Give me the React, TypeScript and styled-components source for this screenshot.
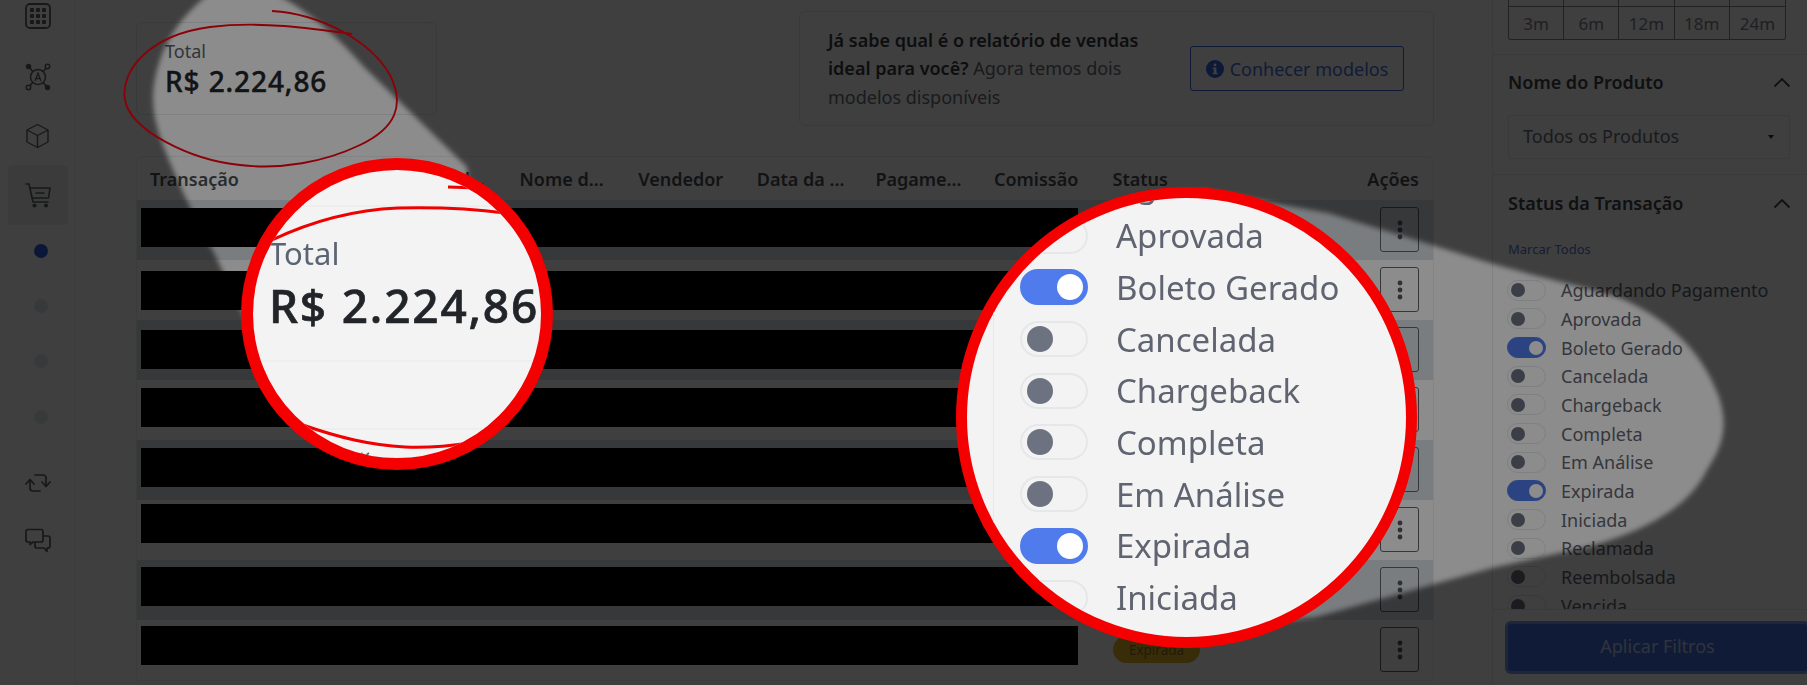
import React from "react";
import styled, { createGlobalStyle } from "styled-components";

const Global = createGlobalStyle`
  html, body { margin: 0; padding: 0; background: #fff; }
  body { font-family: "Noto Sans", "Open Sans", "Liberation Sans", sans-serif; color: #212529; }
  * { box-sizing: border-box; }
`;

const Page = styled.div`
  position: relative;
  display: flex;
  width: 1807px;
  height: 685px;
  overflow: hidden;
  background: #fff;
`;

/* ---------- sidebar ---------- */
const Sidebar = styled.nav`
  flex: 0 0 76px;
  display: flex;
  flex-direction: column;
  align-items: center;
  border-right: 1px solid #eceef0;
  padding-top: 3px;
`;
const NavIcon = styled.div<{ $active?: boolean; $gap?: number }>`
  width: 60px;
  height: ${(p) => (p.$active ? 60 : 26)}px;
  margin-top: ${(p) => p.$gap ?? 0}px;
  display: flex;
  align-items: center;
  justify-content: center;
  border-radius: 4px;
  background: ${(p) => (p.$active ? "#eef1f5" : "transparent")};
  color: #5f6266;
`;
const NavDot = styled.span<{ $active?: boolean; $gap: number }>`
  width: 14px;
  height: 14px;
  margin-top: ${(p) => p.$gap}px;
  margin-left: 7px;
  border-radius: 50%;
  background: ${(p) => (p.$active ? "#2f5fe8" : "#e3e8ec")};
`;

/* ---------- main ---------- */
const Main = styled.main`
  flex: 0 0 1416px;
  padding: 11px 58px 0 60px;
  display: flex;
  flex-direction: column;
`;
const TopRow = styled.div`
  display: flex;
  justify-content: space-between;
  align-items: center;
  height: 115px;
`;
const TotalCard = styled.section`
  width: 301px;
  height: 93px;
  border: 1px solid #e8eaed;
  border-radius: 6px;
  padding: 16px 28px;
`;
const TotalLabel = styled.div`
  font-size: 18px;
  line-height: 24px;
  color: #5a5f6a;
`;
const TotalValue = styled.div`
  font-size: 28px;
  line-height: 36px;
  font-weight: 500;
  letter-spacing: 0.9px;
  -webkit-text-stroke: 0.4px #212529;
  white-space: nowrap;
  color: #212529;
`;
const PromoCard = styled.section`
  width: 635px;
  height: 115px;
  border: 1px solid #e8eaed;
  border-radius: 6px;
  padding: 0 29px 0 28px;
  display: flex;
  align-items: center;
  justify-content: space-between;
`;
const PromoText = styled.p`
  margin: 0;
  width: 332px;
  font-size: 18px;
  line-height: 28.6px;
  color: #6a6f78;
  b { color: #3a3d42; font-weight: 600; }
`;
const OutlineButton = styled.button`
  flex: 0 0 214px;
  height: 45px;
  border: 1px solid #3a66e0;
  border-radius: 3px;
  background: transparent;
  color: #4a72e0;
  font: inherit;
  font-size: 18px;
  display: flex;
  align-items: center;
  justify-content: center;
  gap: 6px;
`;

const Table = styled.section`
  margin-top: 30px;
  flex: 0 0 524px;
  border: 1px solid #eceef0;
  border-radius: 6px 6px 0 0;
  display: flex;
  flex-direction: column;
`;
const HeadRow = styled.div`
  height: 43px;
  display: grid;
  grid-template-columns: 251px repeat(7, 118.6px) 1fr;
  padding: 0 14px 0 13px;
  align-items: center;
  font-size: 18px;
  font-weight: 600;
  color: #4b4f55;
`;
const HeadCell = styled.div<{ $right?: boolean }>`
  white-space: nowrap;
  text-align: ${(p) => (p.$right ? "right" : "left")};
`;
const Row = styled.div<{ $odd: boolean }>`
  position: relative;
  height: 60px;
  background: ${(p) => (p.$odd ? "#dfe3e8" : "#fff")};
  display: flex;
  justify-content: flex-end;
  align-items: flex-start;
  padding: 7px 14px 0 0;
`;
const Redaction = styled.div`
  position: absolute;
  left: 4px;
  width: 937px;
  height: 39px;
  background: #000;
`;
const Badge = styled.span`
  position: absolute;
  left: 976px;
  top: 16px;
  width: 87px;
  height: 27px;
  border-radius: 14px;
  background: #e6b422;
  color: #8a7020;
  font-size: 13.5px;
  display: flex;
  align-items: center;
  justify-content: center;
`;
const KebabButton = styled.button`
  width: 39px;
  height: 45px;
  border: 1px solid #60646a;
  border-radius: 3px;
  background: transparent;
  padding: 0;
  display: flex;
  align-items: center;
  justify-content: center;
`;

/* ---------- filter panel ---------- */
const Panel = styled.aside`
  flex: 0 0 315px;
  height: 685px;
  border-left: 1px solid #e8eaed;
  display: flex;
  flex-direction: column;
`;
const PanelScroll = styled.div`
  flex: 1;
  overflow: hidden;
`;
const PanelSection = styled.section`
  padding: 0 15px;
  border-bottom: 1px solid #e8eaed;
`;
const PeriodGrid = styled.div`
  width: 278px;
  display: grid;
  grid-template-columns: repeat(5, 1fr);
  grid-template-rows: 7px 32px;
  border: 1px solid #8a8d92;
  border-top: 0;
  border-radius: 0 0 3px 3px;
  margin-bottom: 14px;
`;
const PeriodCell = styled.div<{ $last?: boolean }>`
  border-right: ${(p) => (p.$last ? "0" : "1px solid #8a8d92")};
  display: flex;
  align-items: center;
  justify-content: center;
  font-size: 17px;
  color: #80848a;
`;
const PeriodStub = styled(PeriodCell)`
  border-bottom: 1px solid #8a8d92;
`;
const SectionHead = styled.div<{ $top: number }>`
  display: flex;
  justify-content: space-between;
  align-items: center;
  margin-top: ${(p) => p.$top}px;
  padding-right: 1px;
  height: 28px;
  font-size: 18px;
  font-weight: 600;
  color: #3f4348;
`;
const SelectBox = styled.div`
  margin: 19px 2px 15px 0;
  height: 44px;
  padding: 0 14px 3px;
  border: 1px solid #e8eaed;
  border-radius: 3px;
  display: flex;
  align-items: center;
  justify-content: space-between;
  font-size: 18px;
  color: #6a6f78;
`;
const Caret = styled.span`
  width: 0;
  height: 0;
  border-left: 3.5px solid transparent;
  border-right: 3.5px solid transparent;
  border-top: 4px solid #333;
  margin: 3px 1px 0 0;
`;
const MarkAll = styled.div`
  margin-top: 23px;
  font-size: 13px;
  line-height: 18px;
  color: #5a78dc;
`;
const StatusList = styled.div`
  margin-top: 18px;
  margin-left: -1px;
`;
const StatusRow = styled.div`
  height: 28.67px;
  display: flex;
  align-items: center;
  gap: 15px;
  font-size: 18px;
  color: #5f6470;
  white-space: nowrap;
`;
const Toggle = styled.span<{ $on: boolean; $big?: boolean }>`
  position: relative;
  flex: 0 0 auto;
  width: ${(p) => (p.$big ? 68 : 39)}px;
  height: ${(p) => (p.$big ? 36 : 21)}px;
  border-radius: 18px;
  border: ${(p) => (p.$big ? 2 : 1)}px solid ${(p) => (p.$on ? "#4f7bec" : "#e6e7ea")};
  background: ${(p) => (p.$on ? "#4f7bec" : "transparent")};
  &::after {
    content: "";
    position: absolute;
    top: 50%;
    width: ${(p) => (p.$big ? 26 : 14)}px;
    height: ${(p) => (p.$big ? 26 : 14)}px;
    transform: translateY(-50%);
    border-radius: 50%;
    background: ${(p) => (p.$on ? "#fff" : "#6c7280")};
    ${(p) => (p.$on ? `right: ${p.$big ? 3 : 2}px;` : `left: ${p.$big ? 5 : 3}px;`)}
  }
`;
const PanelFooter = styled.div`
  flex: 0 0 76px;
  border-top: 1px solid #e8eaed;
  padding: 14px 0 0 15px;
`;
const ApplyButton = styled.button`
  display: block;
  width: 299px;
  height: 47px;
  padding: 0 0 3px;
  border: 0;
  border-radius: 3px;
  background: #4070e0;
  box-shadow: 0 0 0 3px #7d9bea;
  color: #c4d0f0;
  font: inherit;
  font-size: 18px;
`;

/* ---------- overlays ---------- */
const Overlay = styled.svg`
  position: absolute;
  inset: 0;
  pointer-events: none;
`;
const Lens = styled.div<{ $x: number; $y: number; $size: number; $ring: number }>`
  position: absolute;
  left: ${(p) => p.$x}px;
  top: ${(p) => p.$y}px;
  width: ${(p) => p.$size}px;
  height: ${(p) => p.$size}px;
  border: ${(p) => p.$ring}px solid #f50000;
  border-radius: 50%;
  background: #f3f3f3;
  overflow: hidden;
`;
const LensDrawing = styled.svg`
  position: absolute;
  left: 0;
  top: 0;
`;
const LensTotal = styled.div`
  padding: 65px 0 0 16px;
  filter: blur(0.4px);
`;
const LensLabel = styled.div`
  font-size: 31px;
  line-height: 36px;
  color: #5a6472;
`;
const LensValue = styled.div`
  margin-top: 8px;
  font-size: 46px;
  line-height: 52px;
  font-weight: 500;
  letter-spacing: 1.8px;
  -webkit-text-stroke: 0.7px #212529;
  white-space: nowrap;
  color: #212529;
`;
const LensStatusList = styled.div`
  margin-top: -39.8px;
  padding-left: 53px;
  filter: blur(0.5px);
`;
const LensRow = styled.div`
  height: 51.7px;
  display: flex;
  align-items: center;
  gap: 28px;
  font-size: 33px;
  color: #5f6470;
  white-space: nowrap;
`;
const LensPanelEdge = styled.div`
  position: absolute;
  left: 26px;
  top: 0;
  bottom: 0;
  width: 1px;
  background: #e8e8ea;
`;

/* ---------- icons ---------- */
const GridIcon = () => (
  <svg width="26" height="26" viewBox="0 0 26 26" fill="none">
    <rect x="1" y="1" width="24" height="24" rx="4" stroke="currentColor" strokeWidth="1.8" />
    {[7, 13, 19].flatMap((y) =>
      [7, 13, 19].map((x) => <rect key={`${x}-${y}`} x={x - 2} y={y - 2} width="4" height="4" rx="0.8" fill="currentColor" />)
    )}
  </svg>
);
const NetworkIcon = () => (
  <svg width="26" height="28" viewBox="0 0 26 28" fill="none" stroke="currentColor" strokeWidth="1.5">
    <circle cx="13" cy="14" r="7.5" />
    <path d="M10 18l3-8 3 8M11 15.5h4" strokeWidth="1.3" />
    <path d="M5 5l3 4M21 5l-3 4M5 23l3-4M21 23l-3-4" />
    <circle cx="3.5" cy="3.5" r="2" fill="currentColor" />
    <circle cx="22.5" cy="3.5" r="2.2" />
    <circle cx="3.5" cy="24.5" r="2.2" />
    <circle cx="22.5" cy="24.5" r="2" fill="currentColor" />
  </svg>
);
const CubeIcon = () => (
  <svg width="25" height="26" viewBox="0 0 25 26" fill="none" stroke="currentColor" strokeWidth="1.4" strokeLinejoin="round">
    <path d="M12.5 1.5 L23 7 V19 L12.5 24.5 L2 19 V7 Z" />
    <path d="M2 7 L12.5 12.5 L23 7 M12.5 12.5 V24.5" />
  </svg>
);
const CartIcon = () => (
  <svg width="26" height="26" viewBox="0 0 26 26" fill="none" stroke="currentColor" strokeWidth="1.6" strokeLinejoin="round" strokeLinecap="round">
    <path d="M1 2h3l4 18h15" />
    <path d="M5 6h20l-1.5 10H7" />
    <path d="M11 11h8" />
    <circle cx="9.5" cy="23.5" r="1.3" fill="currentColor" />
    <circle cx="21" cy="23.5" r="1.3" fill="currentColor" />
  </svg>
);
const RepeatIcon = () => (
  <svg width="26" height="20" viewBox="0 0 26 20" fill="none" stroke="currentColor" strokeWidth="1.7" strokeLinecap="round" strokeLinejoin="round">
    <path d="M1 11l4-4.5L9 11" />
    <path d="M5 7V15a3 3 0 0 0 3 3h7" />
    <path d="M25 9l-4 4.5L17 9" />
    <path d="M21 13V5a3 3 0 0 0-3-3h-8" />
  </svg>
);
const ChatIcon = () => (
  <svg width="26" height="26" viewBox="0 0 26 26" fill="none" stroke="currentColor" strokeWidth="1.7" strokeLinejoin="round">
    <path d="M3 1.5h13a2 2 0 0 1 2 2V12a2 2 0 0 1-2 2H8l-3 2.5V14H3a2 2 0 0 1-2-2V3.5a2 2 0 0 1 2-2z" />
    <path d="M18 8h5a2 2 0 0 1 2 2v8a2 2 0 0 1-2 2h-1v3.5L19 20h-7a2 2 0 0 1-2-2v-4" />
  </svg>
);
const InfoIcon = () => (
  <svg width="18" height="18" viewBox="0 0 18 18">
    <circle cx="9" cy="9" r="9" fill="#3a66e0" />
    <rect x="7.6" y="3.4" width="2.8" height="2.8" rx="1.2" fill="#fff" />
    <path d="M6.8 7.5h3.6v5.2h1v1.6H6.8v-1.6h1v-3.6h-1z" fill="#fff" />
  </svg>
);
const KebabIcon = () => (
  <svg width="6" height="22" viewBox="0 0 6 22" fill="#55595f">
    <circle cx="3" cy="4" r="2.4" />
    <circle cx="3" cy="11" r="2.4" />
    <circle cx="3" cy="18" r="2.4" />
  </svg>
);
const Chevron = () => (
  <svg width="18" height="11" viewBox="0 0 18 11" fill="none" stroke="#3f4348" strokeWidth="1.8">
    <path d="M1.5 9.5L9 2l7.5 7.5" />
  </svg>
);

const barTops = [8, 11, 10, 8, 8, 4, 7, 6];
const statuses: [string, boolean][] = [
  ["Aguardando Pagamento", false],
  ["Aprovada", false],
  ["Boleto Gerado", true],
  ["Cancelada", false],
  ["Chargeback", false],
  ["Completa", false],
  ["Em Análise", false],
  ["Expirada", true],
  ["Iniciada", false],
  ["Reclamada", false],
  ["Reembolsada", false],
  ["Vencida", false],
];
const headers = ["Transação", "Nome d...", "Nome d...", "Vendedor", "Data da ...", "Pagame...", "Comissão", "Status"];

export default function App() {
  return (
    <Page>
      <Global />
      <Sidebar>
        <NavIcon><GridIcon /></NavIcon>
        <NavIcon $gap={35}><NetworkIcon /></NavIcon>
        <NavIcon $gap={33}><CubeIcon /></NavIcon>
        <NavIcon $active $gap={16}><CartIcon /></NavIcon>
        <NavDot $active $gap={19} />
        <NavDot $gap={41} />
        <NavDot $gap={41} />
        <NavDot $gap={42} />
        <NavIcon $gap={46}><RepeatIcon /></NavIcon>
        <NavIcon $gap={32}><ChatIcon /></NavIcon>
      </Sidebar>

      <Main>
        <TopRow>
          <TotalCard>
            <TotalLabel>Total</TotalLabel>
            <TotalValue>R$ 2.224,86</TotalValue>
          </TotalCard>
          <PromoCard>
            <PromoText>
              <b>Já sabe qual é o relatório de vendas ideal para você?</b> Agora temos dois modelos disponíveis
            </PromoText>
            <OutlineButton><InfoIcon />Conhecer modelos</OutlineButton>
          </PromoCard>
        </TopRow>
        <Table>
          <HeadRow>
            {headers.map((h, i) => <HeadCell key={i}>{h}</HeadCell>)}
            <HeadCell $right>Ações</HeadCell>
          </HeadRow>
          {barTops.map((top, i) => (
            <Row key={i} $odd={i % 2 === 0}>
              <Redaction style={{ top }} />
              {i === 7 && <Badge>Expirada</Badge>}
              <KebabButton><KebabIcon /></KebabButton>
            </Row>
          ))}
        </Table>
      </Main>

      <Panel>
        <PanelScroll>
          <PanelSection>
            <PeriodGrid>
              {[0, 1, 2, 3, 4].map((i) => <PeriodStub key={i} $last={i === 4} />)}
              {["3m", "6m", "12m", "18m", "24m"].map((m, i) => <PeriodCell key={m} $last={i === 4}>{m}</PeriodCell>)}
            </PeriodGrid>
          </PanelSection>
          <PanelSection>
            <SectionHead $top={13}>Nome do Produto<Chevron /></SectionHead>
            <SelectBox>Todos os Produtos<Caret /></SelectBox>
          </PanelSection>
          <PanelSection>
            <SectionHead $top={14}>Status da Transação<Chevron /></SectionHead>
            <MarkAll>Marcar Todos</MarkAll>
            <StatusList>
              {statuses.map(([s, on]) => (
                <StatusRow key={s}><Toggle $on={on} />{s}</StatusRow>
              ))}
            </StatusList>
          </PanelSection>
        </PanelScroll>
        <PanelFooter>
          <ApplyButton>Aplicar Filtros</ApplyButton>
        </PanelFooter>
      </Panel>

      <Overlay width="1807" height="685" viewBox="0 0 1807 685">
        <defs>
          <filter id="soft" x="-5%" y="-5%" width="110%" height="110%">
            <feGaussianBlur stdDeviation="2.5" />
          </filter>
          <mask id="beams" maskUnits="userSpaceOnUse" x="0" y="0" width="1807" height="685">
            <rect width="1807" height="685" fill="#fff" />
            <g fill="#000" filter="url(#soft)">
              <path d="M214 -10 C190 8 170 30 160 60 C150 90 152 110 158 130 C165 155 190 210 214 253 L260 350 L480 300 L467 167 L398 100 L364 67 C340 40 310 10 268 -10 Z" />
              <path d="M1200 190 L1328 213 L1432 245 L1490 263 C1550 280 1590 288 1620 298 C1660 315 1700 345 1719 397 C1730 430 1720 450 1707 470 C1690 505 1650 530 1587 547 L1492 568 L1316 617 L1200 630 Z" />
            </g>
          </mask>
        </defs>
        <rect width="1807" height="685" fill="#000" opacity="0.45" />
        <rect width="1807" height="685" fill="#000" opacity="0.545" mask="url(#beams)" />
        <path
          d="M272 11 C320 14 370 40 390 75 C405 105 396 128 360 145 C325 162 280 170 240 165 C190 160 130 130 125 100 C120 70 150 35 210 27 C260 21 310 28 352 34"
          fill="none"
          stroke="#8c0008"
          strokeWidth="1.8"
        />
      </Overlay>

      <Lens $x={241} $y={158} $size={312} $ring={12}>
        <LensTotal>
          <LensLabel>Total</LensLabel>
          <LensValue>R$ 2.224,86</LensValue>
        </LensTotal>
        <LensDrawing width="288" height="288" viewBox="253 170 288 288" fill="none">
          <path d="M253 361h288M253 429h288M253 206h288" stroke="#e9e9ec" strokeWidth="1" />
          <path d="M272 240 C310 222 350 210 398 208 C440 207 475 209 505 213" stroke="#f00000" strokeWidth="3" />
          <path d="M448 187 L478 188" stroke="#f00000" strokeWidth="3" />
          <path d="M300 424 C340 438 370 445 405 447 C430 448 450 446 470 443" stroke="#f00000" strokeWidth="3" />
          <path d="M361 453 l4 3 l4 -3" stroke="#5a6472" strokeWidth="1.6" />
        </LensDrawing>
      </Lens>

      <Lens $x={956} $y={187} $size={461} $ring={11}>
        <LensPanelEdge />
        <LensStatusList>
          {statuses.slice(0, 9).map(([s, on]) => (
            <LensRow key={s}><Toggle $on={on} $big />{s}</LensRow>
          ))}
        </LensStatusList>
      </Lens>
    </Page>
  );
}
